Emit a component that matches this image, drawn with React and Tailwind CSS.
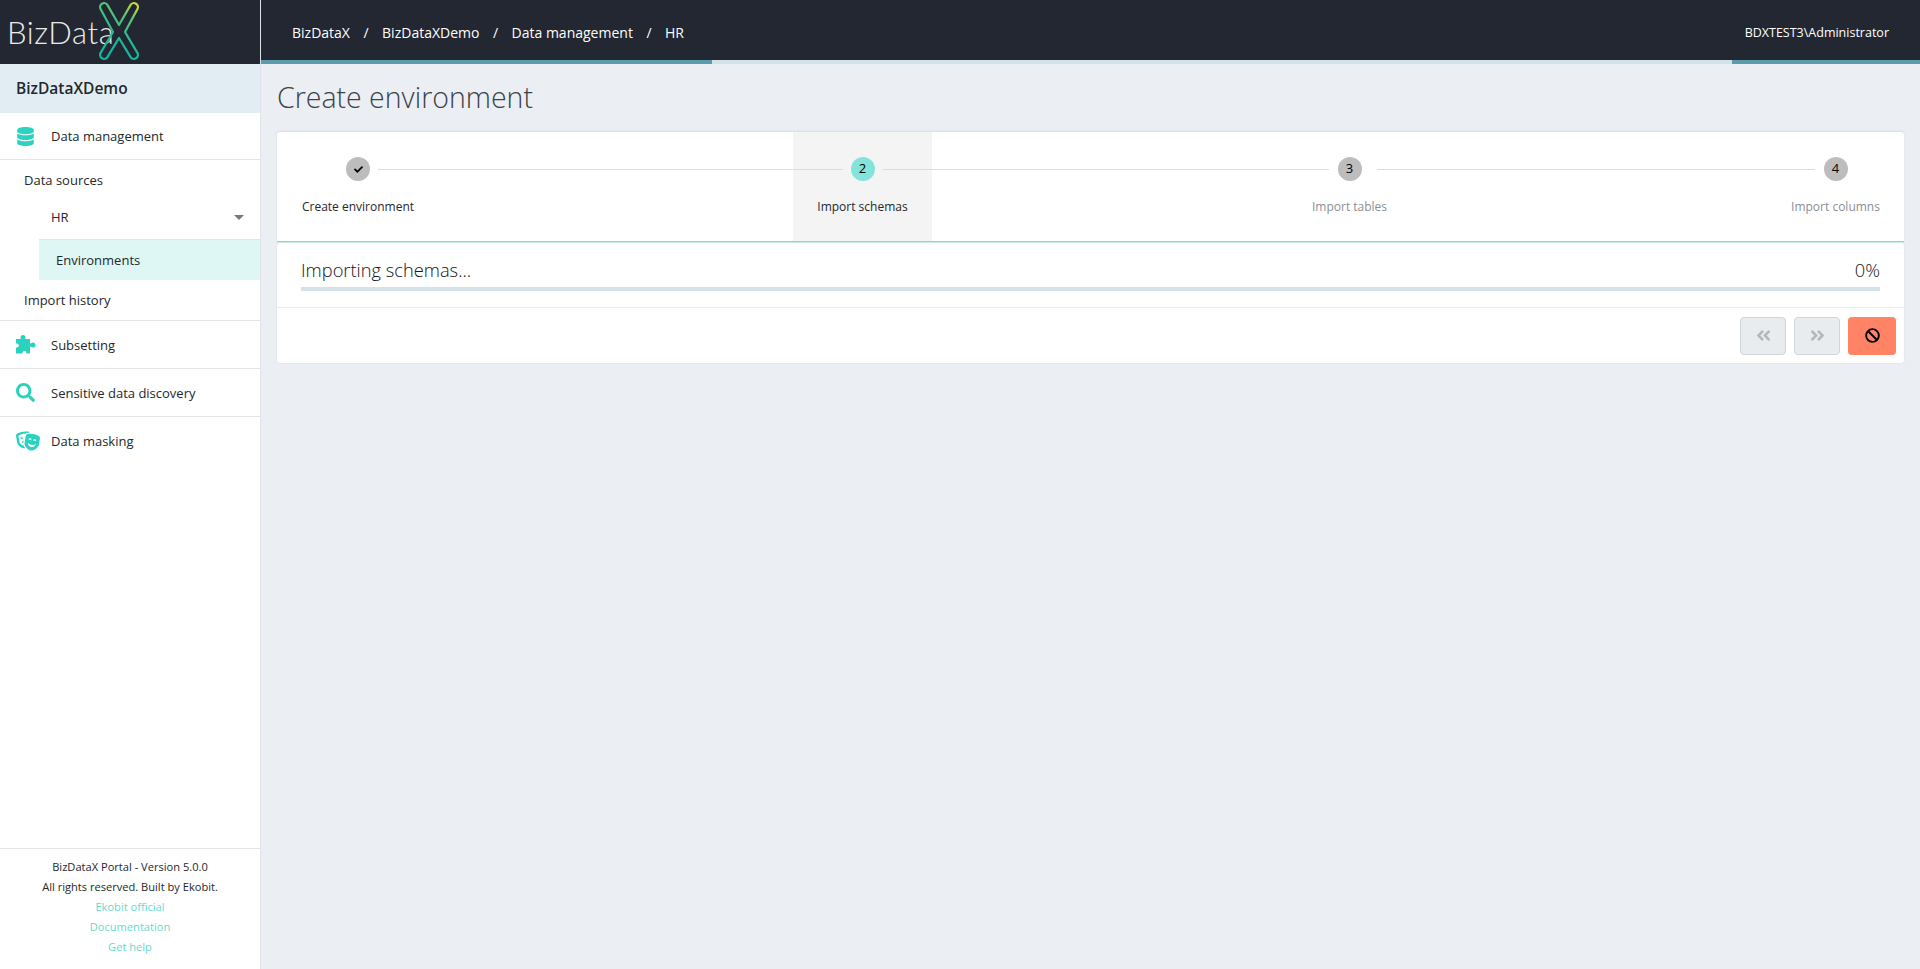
import { FaDatabase, FaSearch, FaTheaterMasks, FaCheck, FaAngleDoubleLeft, FaAngleDoubleRight, FaBan } from 'react-icons/fa';

const LogoX = () => (
  <svg width="40" height="64" viewBox="0 0 40 64" fill="none" className="relative shrink-0">
    <defs>
      <linearGradient id="logoX" gradientUnits="userSpaceOnUse" x1="38" y1="4" x2="8" y2="50">
        <stop offset="0" stopColor="#d3dc2c" />
        <stop offset="0.28" stopColor="#5cc572" />
        <stop offset="0.7" stopColor="#1fb99a" />
        <stop offset="1" stopColor="#10b7a0" />
      </linearGradient>
    </defs>
    <path
      d="M8.4 4.9 L20 25 L31.6 4.9 A4 4 0 0 1 38.4 9.1 L26 32 L38.4 52.9 A4 4 0 0 1 31.6 57.1 L20 38 L8.4 57.1 A4 4 0 0 1 1.6 52.9 L14 32 L1.6 9.1 A4 4 0 0 1 8.4 4.9 Z"
      stroke="url(#logoX)"
      strokeWidth="2.2"
      strokeLinejoin="round"
    />
  </svg>
);

const Puzzle = () => (
  <svg width="20" height="19" viewBox="0 0 20 19">
    <rect x="0" y="4" width="14" height="14.5" fill="#2bd2c0" />
    <circle cx="7" cy="2.5" r="2.5" fill="#2bd2c0" />
    <rect x="5.5" y="3" width="3" height="2" fill="#2bd2c0" />
    <circle cx="17" cy="10" r="2.5" fill="#2bd2c0" />
    <rect x="13" y="8.5" width="2" height="3" fill="#2bd2c0" />
    <circle cx="0.8" cy="10.5" r="2" fill="#fff" />
    <circle cx="8.5" cy="18" r="2" fill="#fff" />
  </svg>
);

const NavItem = ({ icon, label }) => (
  <div className="flex h-12 items-center border-t border-[#e4e4e4] pl-4">
    <span className="flex w-[35px] shrink-0 items-center text-[#2bd2c0]">{icon}</span>
    <span className="pt-[2px]">{label}</span>
  </div>
);

const Step = ({ width, circle, label, active, muted }) => (
  <div className={`relative flex shrink-0 flex-col items-center pt-[25px] ${width} ${active ? 'bg-[#f4f4f4]' : ''}`}>
    <div className={`flex h-6 w-6 items-center justify-center rounded-full text-[13px] text-black ${active ? 'bg-[#84e3da]' : 'bg-[#bdbdbd]'}`}>
      {circle}
    </div>
    <div className={`mt-4 whitespace-nowrap text-xs leading-5 ${muted ? 'text-[#8a8f94]' : 'text-[#23282c]'}`}>{label}</div>
  </div>
);

const Line = ({ className }) => <div className={`relative z-10 mt-[37px] h-px shrink-0 bg-[#dcdcdc] ${className}`} />;

export default function App() {
  return (
    <div className="flex h-screen overflow-hidden bg-[#ebeef3] font-['Open_Sans',sans-serif] text-[13px] text-[#23282c]">
      <aside className="flex w-[261px] shrink-0 flex-col border-r border-[#dfe3e8] bg-white">
        <div className="flex h-16 shrink-0 items-center bg-[#222731] pl-[7px]">
          <span className="font-['Lato',sans-serif] text-[31px] font-light leading-none tracking-[0.6px] text-[#ececec]">BizData</span>
          <span className="-ml-[15px] flex"><LogoX /></span>
        </div>
        <div className="flex h-[49px] shrink-0 items-center bg-[#e2edf3] pl-4 text-[15.5px] font-semibold">BizDataXDemo</div>
        <nav className="flex-1">
          <div className="flex h-[46px] items-center pl-4">
            <span className="flex w-[35px] shrink-0 items-center text-[#2bd2c0]"><FaDatabase size={19} /></span>
            <span className="pt-[2px]">Data management</span>
          </div>
          <div className="border-t border-[#e4e4e4]">
            <div className="flex h-[42px] items-center pl-6">Data sources</div>
            <div className="flex h-[37px] items-center justify-between pb-[6px] pl-[51px] pr-4">
              <span>HR</span>
              <span className="h-0 w-0 border-x-[5px] border-t-[5px] border-x-transparent border-t-[#77797c]" />
            </div>
            <div className="ml-[39px] flex h-[41px] items-center border-t border-[#e4e4e4] bg-[#def7f4] pl-[17px] pt-[2px]">Environments</div>
            <div className="flex h-10 items-center pl-6 pt-[2px]">Import history</div>
          </div>
          <NavItem icon={<Puzzle />} label="Subsetting" />
          <NavItem icon={<FaSearch size={19} />} label="Sensitive data discovery" />
          <NavItem icon={<FaTheaterMasks size={24} />} label="Data masking" />
        </nav>
        <footer className="flex shrink-0 flex-col items-center border-t border-[#e4e4e4] pb-3 pt-2 text-[11.1px] leading-5">
          <div>BizDataX Portal - Version 5.0.0</div>
          <div>All rights reserved. Built by Ekobit.</div>
          <a className="text-[#5fdccd]">Ekobit official</a>
          <a className="text-[#5fdccd]">Documentation</a>
          <a className="text-[#5fdccd]">Get help</a>
        </footer>
      </aside>

      <main className="flex min-w-0 flex-1 flex-col">
        <header className="flex h-[60px] shrink-0 items-center justify-between bg-[#222731] px-[31px] pt-[6px] text-sm font-medium text-white">
          <div className="flex items-center gap-[13.5px]">
            <span>BizDataX</span>
            <span>/</span>
            <span>BizDataXDemo</span>
            <span>/</span>
            <span>Data management</span>
            <span>/</span>
            <span>HR</span>
          </div>
          <span className="text-[12.5px]">BDXTEST3\Administrator</span>
        </header>
        <div className="flex h-1 shrink-0 justify-between bg-[#d3e3e8]">
          <div className="w-[451px] bg-[#5a9dac]" />
          <div className="w-[188px] bg-[#5a9dac]" />
        </div>

        <div className="px-4">
          <h1 className="h-[68px] pt-[13px] text-[28.5px] font-light leading-10 text-[#3c4247]">Create environment</h1>

          <div className="relative z-10 flex h-[110px] rounded-t-[3px] border-b border-[#7fdccf] bg-white shadow-[0_-1px_2px_rgba(0,0,0,0.08),0_1px_0_#c8ebe6]">
            <Step width="w-[162px]" circle={<FaCheck size={9} />} label="Create environment" />
            <Line className="-ml-[61px] -mr-[50px] w-[465px]" />
            <Step width="w-[139px]" circle="2" label="Import schemas" active />
            <Line className="-ml-[49px] -mr-[42px] w-[446px]" />
            <Step width="w-[125px]" circle="3" label="Import tables" muted />
            <Line className="-ml-[35px] -mr-[49px] w-[438px]" />
            <Step width="w-[139px]" circle="4" label="Import columns" muted />
          </div>

          <div className="mt-px rounded-[3px] bg-white shadow-[0_0_2px_rgba(0,0,0,0.1)]">
            <div className="h-[65px] border-b border-[#ececec] px-6 pt-[13px]">
              <div className="flex items-center justify-between text-[18.3px] font-light leading-7 text-[#111418]">
                <span>Importing schemas...</span>
                <span>0%</span>
              </div>
              <div className="mt-[3px] h-1 bg-[#d2e2e7]" />
            </div>
            <div className="flex h-[55px] items-center justify-end gap-2 pr-2">
              <button className="flex h-[38px] w-[46px] items-center justify-center rounded border border-[#d0d5da] bg-[#e8ecef] text-[#b4b8bc]"><FaAngleDoubleLeft size={17} /></button>
              <button className="flex h-[38px] w-[46px] items-center justify-center rounded border border-[#d0d5da] bg-[#e8ecef] text-[#b4b8bc]"><FaAngleDoubleRight size={17} /></button>
              <button className="flex h-[38px] w-[48px] items-center justify-center rounded bg-[#ff8364] text-black"><FaBan size={15} /></button>
            </div>
          </div>
        </div>
      </main>
    </div>
  );
}
